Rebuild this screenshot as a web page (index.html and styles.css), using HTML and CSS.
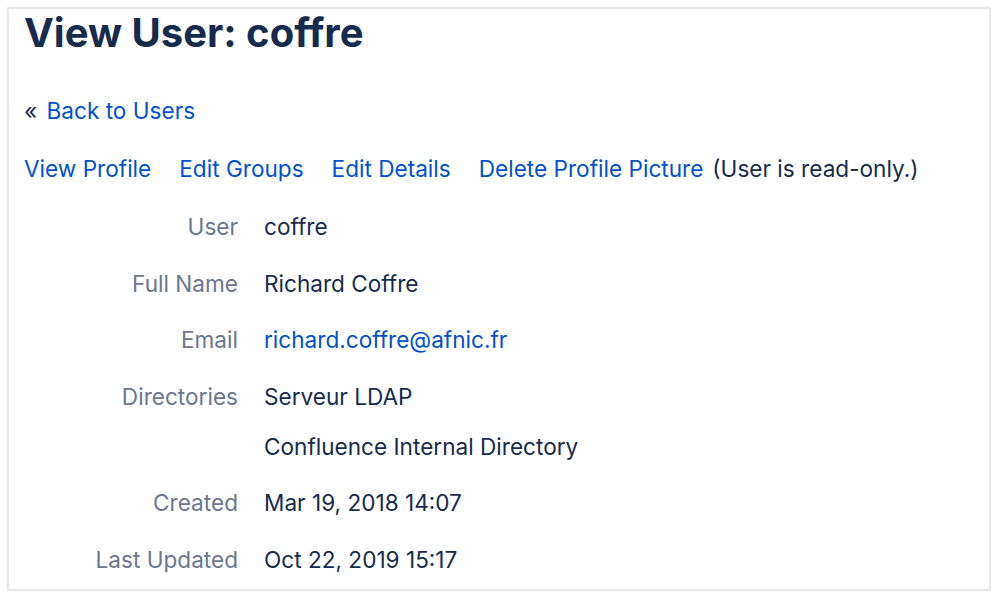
FILE: index.html
```html
<!DOCTYPE html>
<html>
<head>
<meta charset="utf-8">
<link rel="stylesheet" href="styles.css">
</head>
<body>
<div class="frame">
  <h1 class="title">View User: coffre</h1>
  <p class="back">« <a href="#">Back to Users</a></p>
  <div class="actions">
    <a href="#">View Profile</a>
    <a href="#">Edit Groups</a>
    <a href="#">Edit Details</a>
    <span class="last"><a href="#">Delete Profile Picture</a><span class="note">(User is read-only.)</span></span>
  </div>
  <div class="details">
    <div class="label">User</div><div class="value">coffre</div>
    <div class="label">Full Name</div><div class="value">Richard Coffre</div>
    <div class="label">Email</div><div class="value"><a href="#">richard.coffre@afnic.fr</a></div>
    <div class="label">Directories</div><div class="value"><div>Serveur LDAP</div><div class="sub">Confluence Internal Directory</div></div>
    <div class="label">Created</div><div class="value">Mar 19, 2018 14:07</div>
    <div class="label">Last Updated</div><div class="value">Oct 22, 2019 15:17</div>
  </div>
</div>
</body>
</html>
```

FILE: styles.css
```css
html, body { margin: 0; padding: 0; background: #fff; }
body { font-family: Inter, "Noto Sans", sans-serif; color: #172B4D; font-size: 22.6px; }
a { color: #0052CC; text-decoration: none; }
.frame {
  margin: 7px;
  height: 584px;
  border: 2px solid #e8e8e8;
  box-shadow: 0 0 1px #d8d8d8;
  border-radius: 2px;
  padding: 0 0 0 15px;
  box-sizing: border-box;
  overflow: hidden;
}
.title { margin: 4px 0 0; font-size: 40px; font-weight: 700; line-height: 40px; color: #172B4D; }
.back { margin: 43px 0 0; line-height: 30px; }
.back a { margin-left: 3px; }
.actions { margin-top: 28px; line-height: 30px; display: flex; gap: 28px; }
.note { color: #172B4D; margin-left: 9px; }
.details { margin-top: 28px; display: grid; grid-template-columns: 214px auto; column-gap: 26px; row-gap: 26.5px; line-height: 30px; }
.label { text-align: right; color: #6B778C; }
.sub { margin-top: 20px; }
```
